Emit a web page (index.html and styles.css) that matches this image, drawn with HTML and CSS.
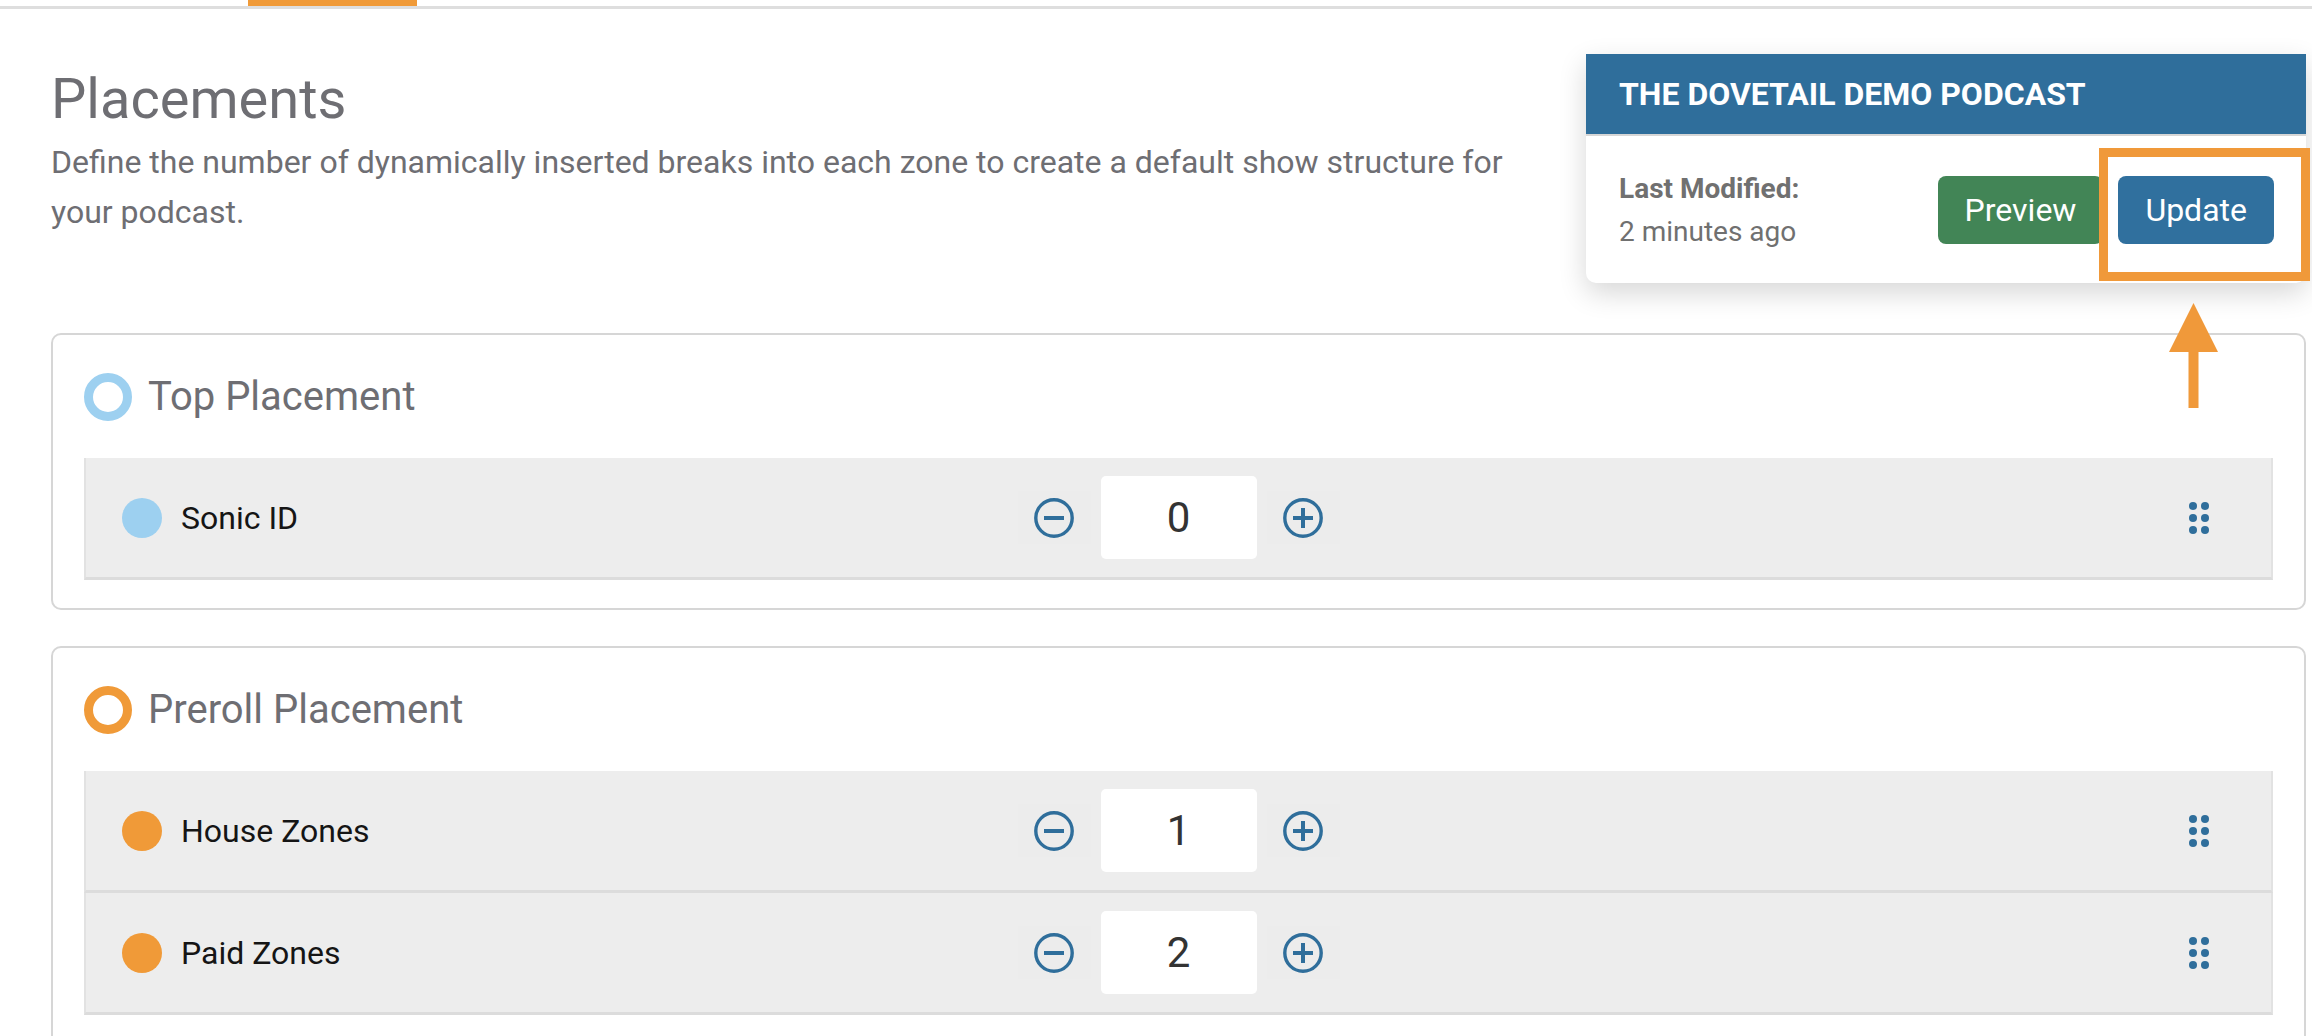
FILE: index.html
```html
<!DOCTYPE html>
<html lang="en">
<head>
<meta charset="utf-8">
<title>Placements</title>
<link rel="stylesheet" href="styles.css">
</head>
<body>
<div class="tabbar"><span class="tab-active"></span></div>
<main class="page">
  <div class="top">
    <div class="intro">
      <h1 class="title">Placements</h1>
      <p class="lead">Define the number of dynamically inserted breaks into each zone to create a default show structure for your podcast.</p>
    </div>
    <aside class="pod-card">
      <div class="pod-head">THE DOVETAIL DEMO PODCAST</div>
      <div class="pod-body">
        <div class="mod">
          <div class="mod-label">Last Modified:</div>
          <div class="mod-time">2 minutes ago</div>
        </div>
        <div class="actions">
          <button class="btn btn-preview">Preview</button>
          <button class="btn btn-update">Update</button>
        </div>
      </div>
    </aside>
  </div>

  <section class="panel">
    <div class="panel-head">
      <span class="ring ring-blue"></span>
      <h2 class="panel-title">Top Placement</h2>
    </div>
    <div class="row">
      <div class="zone"><span class="dot dot-blue"></span>Sonic ID</div>
      <div class="stepper">
        <button class="step-btn"><svg class="step-icon" viewBox="0 0 40 40"><circle cx="20" cy="20" r="18.2" fill="none" stroke="#2f6e9b" stroke-width="3.4"/><line x1="10" y1="20" x2="30" y2="20" stroke="#2f6e9b" stroke-width="4"/></svg></button>
        <div class="count">0</div>
        <button class="step-btn"><svg class="step-icon" viewBox="0 0 40 40"><circle cx="20" cy="20" r="18.2" fill="none" stroke="#2f6e9b" stroke-width="3.4"/><line x1="10" y1="20" x2="30" y2="20" stroke="#2f6e9b" stroke-width="4"/><line x1="20" y1="10" x2="20" y2="30" stroke="#2f6e9b" stroke-width="4"/></svg></button>
      </div>
      <svg class="handle" viewBox="0 0 20 32"><g fill="#2f6e9b"><circle cx="4" cy="4" r="4"/><circle cx="16" cy="4" r="4"/><circle cx="4" cy="16" r="4"/><circle cx="16" cy="16" r="4"/><circle cx="4" cy="28" r="4"/><circle cx="16" cy="28" r="4"/></g></svg>
    </div>
  </section>

  <section class="panel">
    <div class="panel-head">
      <span class="ring ring-orange"></span>
      <h2 class="panel-title">Preroll Placement</h2>
    </div>
    <div class="row">
      <div class="zone"><span class="dot dot-orange"></span>House Zones</div>
      <div class="stepper">
        <button class="step-btn"><svg class="step-icon" viewBox="0 0 40 40"><circle cx="20" cy="20" r="18.2" fill="none" stroke="#2f6e9b" stroke-width="3.4"/><line x1="10" y1="20" x2="30" y2="20" stroke="#2f6e9b" stroke-width="4"/></svg></button>
        <div class="count">1</div>
        <button class="step-btn"><svg class="step-icon" viewBox="0 0 40 40"><circle cx="20" cy="20" r="18.2" fill="none" stroke="#2f6e9b" stroke-width="3.4"/><line x1="10" y1="20" x2="30" y2="20" stroke="#2f6e9b" stroke-width="4"/><line x1="20" y1="10" x2="20" y2="30" stroke="#2f6e9b" stroke-width="4"/></svg></button>
      </div>
      <svg class="handle" viewBox="0 0 20 32"><g fill="#2f6e9b"><circle cx="4" cy="4" r="4"/><circle cx="16" cy="4" r="4"/><circle cx="4" cy="16" r="4"/><circle cx="16" cy="16" r="4"/><circle cx="4" cy="28" r="4"/><circle cx="16" cy="28" r="4"/></g></svg>
    </div>
    <div class="row">
      <div class="zone"><span class="dot dot-orange"></span>Paid Zones</div>
      <div class="stepper">
        <button class="step-btn"><svg class="step-icon" viewBox="0 0 40 40"><circle cx="20" cy="20" r="18.2" fill="none" stroke="#2f6e9b" stroke-width="3.4"/><line x1="10" y1="20" x2="30" y2="20" stroke="#2f6e9b" stroke-width="4"/></svg></button>
        <div class="count">2</div>
        <button class="step-btn"><svg class="step-icon" viewBox="0 0 40 40"><circle cx="20" cy="20" r="18.2" fill="none" stroke="#2f6e9b" stroke-width="3.4"/><line x1="10" y1="20" x2="30" y2="20" stroke="#2f6e9b" stroke-width="4"/><line x1="20" y1="10" x2="20" y2="30" stroke="#2f6e9b" stroke-width="4"/></svg></button>
      </div>
      <svg class="handle" viewBox="0 0 20 32"><g fill="#2f6e9b"><circle cx="4" cy="4" r="4"/><circle cx="16" cy="4" r="4"/><circle cx="4" cy="16" r="4"/><circle cx="16" cy="16" r="4"/><circle cx="4" cy="28" r="4"/><circle cx="16" cy="28" r="4"/></g></svg>
    </div>
  </section>

  <div class="highlight"></div>
  <svg class="arrow" viewBox="0 0 50 105"><polygon points="24.5,0 49,49 0,49" fill="#f0993a"/><rect x="19.5" y="47" width="10" height="58" fill="#f0993a"/></svg>
</main>
</body>
</html>
```

FILE: styles.css
```css
* { box-sizing: border-box; }

body {
  margin: 0;
  width: 2312px;
  height: 1036px;
  overflow: hidden;
  background: #fff;
  font-family: Roboto, "Noto Sans", "Liberation Sans", Arial, sans-serif;
}

.tabbar {
  height: 9px;
  border-bottom: 3px solid #dedede;
  padding-left: 248px;
}

.tab-active {
  display: block;
  width: 169px;
  height: 6px;
  background: #f09a38;
}

.page {
  position: relative;
  padding: 0 6px 0 51px;
}

.top {
  display: flex;
  align-items: flex-start;
  gap: 56px;
  padding-top: 45px;
  margin-bottom: 50px;
}

.intro {
  flex: 1;
  padding-top: 12px;
}

.title {
  margin: 0;
  font-size: 56px;
  line-height: 66px;
  font-weight: 400;
  color: #6e6e73;
}

.lead {
  margin: 5px 0 0;
  font-size: 32px;
  line-height: 50px;
  color: #6e6e73;
}

.pod-card {
  flex: 0 0 720px;
  background: #fff;
  border-radius: 0 0 10px 10px;
  box-shadow: 0 10px 28px rgba(0, 0, 0, 0.16);
}

.pod-head {
  height: 82px;
  display: flex;
  align-items: center;
  padding: 0 33px;
  background: #2f6e9b;
  border-bottom: 2px solid #d6d6d6;
  color: #fff;
  font-size: 32px;
  font-weight: 700;
}

.pod-body {
  height: 147px;
  display: flex;
  align-items: center;
  justify-content: space-between;
  padding: 0 32px 0 33px;
}

.mod {
  font-size: 28px;
  line-height: 43px;
  color: #707070;
}

.mod-label { font-weight: 700; }

.actions {
  display: flex;
  gap: 15px;
}

.btn {
  height: 68px;
  padding: 0 27px;
  border: 0;
  border-radius: 8px;
  color: #fff;
  font-family: Roboto, "Noto Sans", sans-serif;
  font-size: 32px;
  font-weight: 400;
}

.btn-preview { background: #428556; }
.btn-update { background: #30709e; }

.panel {
  border: 2px solid #d6d6d6;
  border-radius: 10px;
  padding: 38px 31px 28px;
  margin-bottom: 36px;
}

.panel-head {
  display: flex;
  align-items: center;
  gap: 16px;
  height: 48px;
  margin-bottom: 37px;
}

.ring {
  width: 48px;
  height: 48px;
  border-radius: 50%;
  border: 9px solid;
  flex: none;
}

.ring-blue { border-color: #9dd0f0; }
.ring-orange { border-color: #f09a38; }

.panel-title {
  margin: 0;
  font-size: 40px;
  line-height: 48px;
  font-weight: 400;
  color: #6e6e73;
}

.row {
  display: grid;
  grid-template-columns: 1fr auto 1fr;
  align-items: center;
  height: 122px;
  background: #ededed;
  border-left: 2px solid #e2e2e2;
  border-right: 2px solid #e2e2e2;
  border-bottom: 3px solid #dcdcdc;
}

.zone {
  display: flex;
  align-items: center;
  gap: 19px;
  margin-left: 36px;
  font-size: 32px;
  color: #151515;
}

.dot {
  width: 40px;
  height: 40px;
  border-radius: 50%;
  flex: none;
}

.dot-blue { background: #9dd0f0; }
.dot-orange { background: #f09a38; }

.stepper {
  display: flex;
  align-items: center;
  gap: 10px;
}

.step-btn {
  width: 73px;
  height: 53px;
  display: flex;
  align-items: center;
  justify-content: center;
  padding: 0;
  border: 0;
  background: #ececec;
}

.step-icon {
  width: 40px;
  height: 40px;
}

.count {
  width: 156px;
  height: 83px;
  display: flex;
  align-items: center;
  justify-content: center;
  background: #fff;
  border-radius: 5px;
  font-size: 42px;
  color: #333;
}

.handle {
  justify-self: end;
  margin-right: 62px;
  width: 20px;
  height: 32px;
}

.highlight {
  position: absolute;
  left: 2099px;
  top: 139px;
  width: 211px;
  height: 133px;
  border: 9px solid #f0993a;
}

.arrow {
  position: absolute;
  left: 2169px;
  top: 294px;
  width: 50px;
  height: 105px;
}
```
